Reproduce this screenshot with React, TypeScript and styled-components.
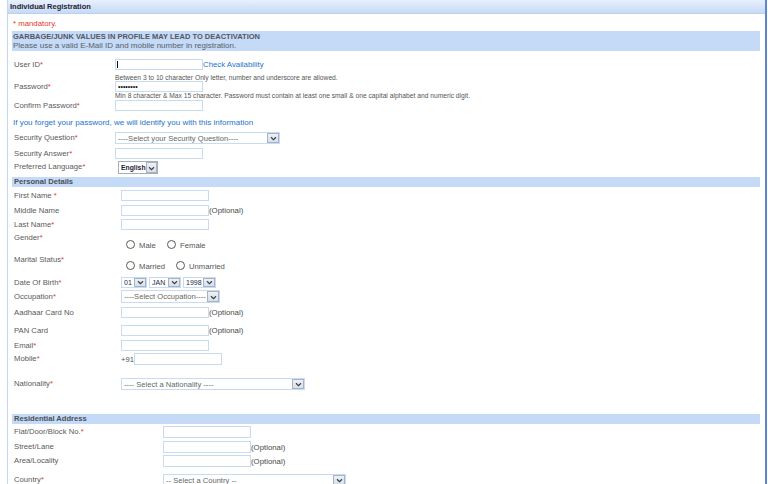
import styled, { createGlobalStyle } from 'styled-components';

const GlobalStyle = createGlobalStyle`
  body {
    margin: 0;
    background: #ffffff;
    font-family: "Liberation Sans", Arial, sans-serif;
  }
`

const Panel = styled.div`
  margin-left: 7px;
  width: 760px;
  min-height: 484px;
  box-sizing: border-box;
  border-left: 1px solid #c3d6f3;
  border-right: 2px solid #5b86cc;
`

const Header = styled.div`
  height: 13px;
  line-height: 13px;
  padding-left: 2px;
  background: linear-gradient(#e8f0fc, #c6daf6);
  border-bottom: 1px solid #b9d0f1;
  font-size: 7.5px;
  font-weight: 700;
  color: #1e2233;
`

const Body = styled.div`
  padding: 0 5px 0 4px;
`

const Mandatory = styled.div`
  margin-top: 4px;
  height: 12px;
  line-height: 12px;
  padding-left: 1px;
  font-size: 7.8px;
  color: #e5392c;
`

const Notice = styled.div`
  margin-top: 1px;
  height: 20px;
  padding: 1px 0 0 1px;
  box-sizing: border-box;
  background: #c4daf6;
  font-size: 8px;
  line-height: 9px;
  color: #59606b;
`

const NoticeTitle = styled.div`
  font-weight: 700;
  font-size: 7.5px;
  color: #525762;
`

const SectionBar = styled.div<{ $mt: number }>`
  margin-top: ${p => p.$mt}px;
  height: 10px;
  line-height: 10px;
  padding-left: 2px;
  background: #c4daf6;
  font-size: 7.6px;
  font-weight: 700;
  color: #4a4f5a;
`

const Row = styled.div<{ $mt: number; $h: number; $label: number; $top?: boolean }>`
  display: grid;
  grid-template-columns: ${p => p.$label}px auto;
  align-items: ${p => (p.$top ? 'start' : 'center')};
  margin-top: ${p => p.$mt}px;
  height: ${p => p.$h}px;
`

const Label = styled.div`
  padding-left: 2px;
  font-size: 7.7px;
  line-height: 10px;
  color: #5a5a5a;
  white-space: nowrap;
`

const Star = styled.span`
  color: #e5392c;
`

const Field = styled.div<{ $pt?: number }>`
  display: flex;
  align-items: center;
  padding-top: ${p => p.$pt ?? 0}px;
`

const InputWrap = styled.span`
  position: relative;
  display: inline-flex;
`

const TextBox = styled.input<{ $w?: number; $h?: number }>`
  width: ${p => p.$w ?? 88}px;
  height: ${p => p.$h ?? 11}px;
  box-sizing: border-box;
  margin: 0;
  padding: 0 2px;
  border: 1px solid #c9dbf3;
  background: #fff;
  font-family: "Liberation Sans", Arial, sans-serif;
  font-size: 7px;
  color: #111;
  outline: none;
`

const Caret = styled.span`
  position: absolute;
  left: 2px;
  top: 2px;
  width: 1px;
  height: 7px;
  background: #111;
`

const Side = styled.span<{ $blue?: boolean }>`
  font-size: 7.8px;
  color: ${p => (p.$blue ? '#1d74cc' : '#4a4a4a')};
  white-space: nowrap;
`

const Hint = styled.div<{ $mt: number; $ml: number }>`
  margin-top: ${p => p.$mt}px;
  margin-left: ${p => p.$ml}px;
  height: 6px;
  line-height: 6px;
  font-size: 6.7px;
  color: #555;
  white-space: nowrap;
`

const Info = styled.div`
  margin-top: 6px;
  height: 12px;
  line-height: 12px;
  padding-left: 1px;
  font-size: 8px;
  color: #1d74cc;
`

const SelectBox = styled.div<{ $w: number; $h?: number; $dark?: boolean }>`
  display: flex;
  align-items: center;
  justify-content: space-between;
  width: ${p => p.$w}px;
  height: ${p => p.$h ?? 12}px;
  box-sizing: border-box;
  padding: 0 0 0 2px;
  border: 1px solid ${p => (p.$dark ? '#a4afbd' : '#c9dbf3')};
  background: #fff;
`

const SelectText = styled.span<{ $strong?: boolean }>`
  font-size: ${p => (p.$strong ? '6.8px' : '7.6px')};
  font-weight: ${p => (p.$strong ? 700 : 400)};
  color: ${p => (p.$strong ? '#1d2236' : '#666')};
  white-space: nowrap;
`

const ArrowBox = styled.span<{ $h?: number }>`
  display: flex;
  align-items: flex-end;
  justify-content: center;
  width: 12px;
  height: ${p => p.$h ?? 10}px;
  box-sizing: border-box;
  padding-bottom: 1px;
  border: 1px solid #a6b3c4;
  background: linear-gradient(#eef1f5, #d9dfe7);
`

const DateGroup = styled.div`
  display: flex;
  gap: 2px;
`

const DatePart = styled.div<{ $w: number }>`
  display: flex;
  align-items: center;
  justify-content: space-between;
  width: ${p => p.$w}px;
  height: 11px;
  box-sizing: border-box;
  padding-left: 2px;
  border: 1px solid #c9dbf3;
  font-size: 7px;
  color: #1c2a4a;
`

const RadioGroup = styled.div`
  display: flex;
  align-items: center;
  padding-left: 5px;
`

const Circle = styled.span`
  width: 9px;
  height: 9px;
  box-sizing: border-box;
  border: 1px solid #5a5a5a;
  border-radius: 50%;
  background: #fff;
`

const RadioText = styled.span<{ $w: number }>`
  width: ${p => p.$w}px;
  padding-left: 4px;
  padding-top: 2px;
  font-size: 7.7px;
  color: #555;
`

const Prefix = styled.span`
  width: 13px;
  font-size: 7.7px;
  color: #555;
`

function Chevron() {
  return (
    <svg width="7" height="5" viewBox="0 0 7 5">
      <path d="M1 1.2 L3.5 3.6 L6 1.2" stroke="#3a3f48" strokeWidth="1.2" fill="none" />
    </svg>
  )
}

function Select({ w, text, h, dark, strong }: { w: number; text: string; h?: number; dark?: boolean; strong?: boolean }) {
  return (
    <SelectBox $w={w} $h={h} $dark={dark}>
      <SelectText $strong={strong}>{text}</SelectText>
      <ArrowBox $h={h ? h - 2 : 10}><Chevron /></ArrowBox>
    </SelectBox>
  )
}

function Req({ text }: { text: string }) {
  return <Label>{text}<Star>*</Star></Label>
}

export default function App() {
  return (
    <>
      <GlobalStyle />
      <Panel>
        <Header>Individual Registration</Header>
        <Body>
          <Mandatory>* mandatory.</Mandatory>
          <Notice>
            <NoticeTitle>GARBAGE/JUNK VALUES IN PROFILE MAY LEAD TO DEACTIVATION</NoticeTitle>
            Please use a valid E-Mail ID and mobile number in registration.
          </Notice>

          <Row $mt={8} $h={11} $label={103}>
            <Req text="User ID" />
            <Field>
              <InputWrap><TextBox /><Caret /></InputWrap>
              <Side $blue>Check Availability</Side>
            </Field>
          </Row>
          <Hint $mt={5} $ml={103}>Between 3 to 10 character Only letter, number and underscore are allowed.</Hint>
          <Row $mt={0} $h={11} $label={103}>
            <Req text="Password" />
            <Field><TextBox type="password" defaultValue="abcdefgh" /></Field>
          </Row>
          <Hint $mt={1} $ml={103}>Min 8 character &amp; Max 15 character. Password must contain at least one small &amp; one capital alphabet and numeric digit.</Hint>
          <Row $mt={1} $h={11} $label={103}>
            <Req text="Confirm Password" />
            <Field><TextBox /></Field>
          </Row>
          <Info>If you forget your password, we will identify you with this information</Info>
          <Row $mt={3} $h={12} $label={103}>
            <Req text="Security Question" />
            <Field><Select w={165} text="----Select your Security Question----" /></Field>
          </Row>
          <Row $mt={4} $h={11} $label={103}>
            <Req text="Security Answer" />
            <Field><TextBox /></Field>
          </Row>
          <Row $mt={1} $h={14} $label={106}>
            <Req text="Preferred Language" />
            <Field><Select w={40} h={13} dark strong text="English" /></Field>
          </Row>

          <SectionBar $mt={3}>Personal Details</SectionBar>
          <Row $mt={3} $h={11} $label={109}>
            <Label>First Name <Star>*</Star></Label>
            <Field><TextBox /></Field>
          </Row>
          <Row $mt={4} $h={11} $label={109}>
            <Label>Middle Name</Label>
            <Field><TextBox /><Side>(Optional)</Side></Field>
          </Row>
          <Row $mt={3} $h={11} $label={109}>
            <Req text="Last Name" />
            <Field><TextBox /></Field>
          </Row>
          <Row $mt={3} $h={18} $label={109} $top>
            <Req text="Gender" />
            <Field $pt={6}>
              <RadioGroup>
                <Circle /><RadioText $w={28}>Male</RadioText>
                <Circle /><RadioText $w={40}>Female</RadioText>
              </RadioGroup>
            </Field>
          </Row>
          <Row $mt={4} $h={18} $label={109} $top>
            <Req text="Marital Status" />
            <Field $pt={5}>
              <RadioGroup>
                <Circle /><RadioText $w={37}>Married</RadioText>
                <Circle /><RadioText $w={50}>Unmarried</RadioText>
              </RadioGroup>
            </Field>
          </Row>
          <Row $mt={4} $h={11} $label={109}>
            <Req text="Date Of Birth" />
            <Field>
              <DateGroup>
                <DatePart $w={26}>01<ArrowBox $h={9}><Chevron /></ArrowBox></DatePart>
                <DatePart $w={32}>JAN<ArrowBox $h={9}><Chevron /></ArrowBox></DatePart>
                <DatePart $w={33}>1998<ArrowBox $h={9}><Chevron /></ArrowBox></DatePart>
              </DateGroup>
            </Field>
          </Row>
          <Row $mt={2} $h={13} $label={109}>
            <Req text="Occupation" />
            <Field><Select w={99} h={13} text="----Select Occupation----" /></Field>
          </Row>
          <Row $mt={4} $h={11} $label={109}>
            <Label>Aadhaar Card No</Label>
            <Field><TextBox /><Side>(Optional)</Side></Field>
          </Row>
          <Row $mt={7} $h={11} $label={109}>
            <Label>PAN Card</Label>
            <Field><TextBox /><Side>(Optional)</Side></Field>
          </Row>
          <Row $mt={4} $h={11} $label={109}>
            <Req text="Email" />
            <Field><TextBox /></Field>
          </Row>
          <Row $mt={2} $h={12} $label={109}>
            <Req text="Mobile" />
            <Field><Prefix>+91</Prefix><TextBox $h={12} /></Field>
          </Row>
          <Row $mt={13} $h={12} $label={109}>
            <Req text="Nationality" />
            <Field><Select w={184} text="---- Select a Nationality ----" /></Field>
          </Row>

          <SectionBar $mt={24}>Residential Address</SectionBar>
          <Row $mt={2} $h={12} $label={151}>
            <Req text="Flat/Door/Block No." />
            <Field><TextBox $h={12} /></Field>
          </Row>
          <Row $mt={3} $h={12} $label={151}>
            <Label>Street/Lane</Label>
            <Field><TextBox $h={12} /><Side>(Optional)</Side></Field>
          </Row>
          <Row $mt={2} $h={12} $label={151}>
            <Label>Area/Locality</Label>
            <Field><TextBox $h={12} /><Side>(Optional)</Side></Field>
          </Row>
          <Row $mt={7} $h={12} $label={151}>
            <Req text="Country" />
            <Field><Select w={183} text="-- Select a Country --" /></Field>
          </Row>
        </Body>
      </Panel>
    </>
  )
}
